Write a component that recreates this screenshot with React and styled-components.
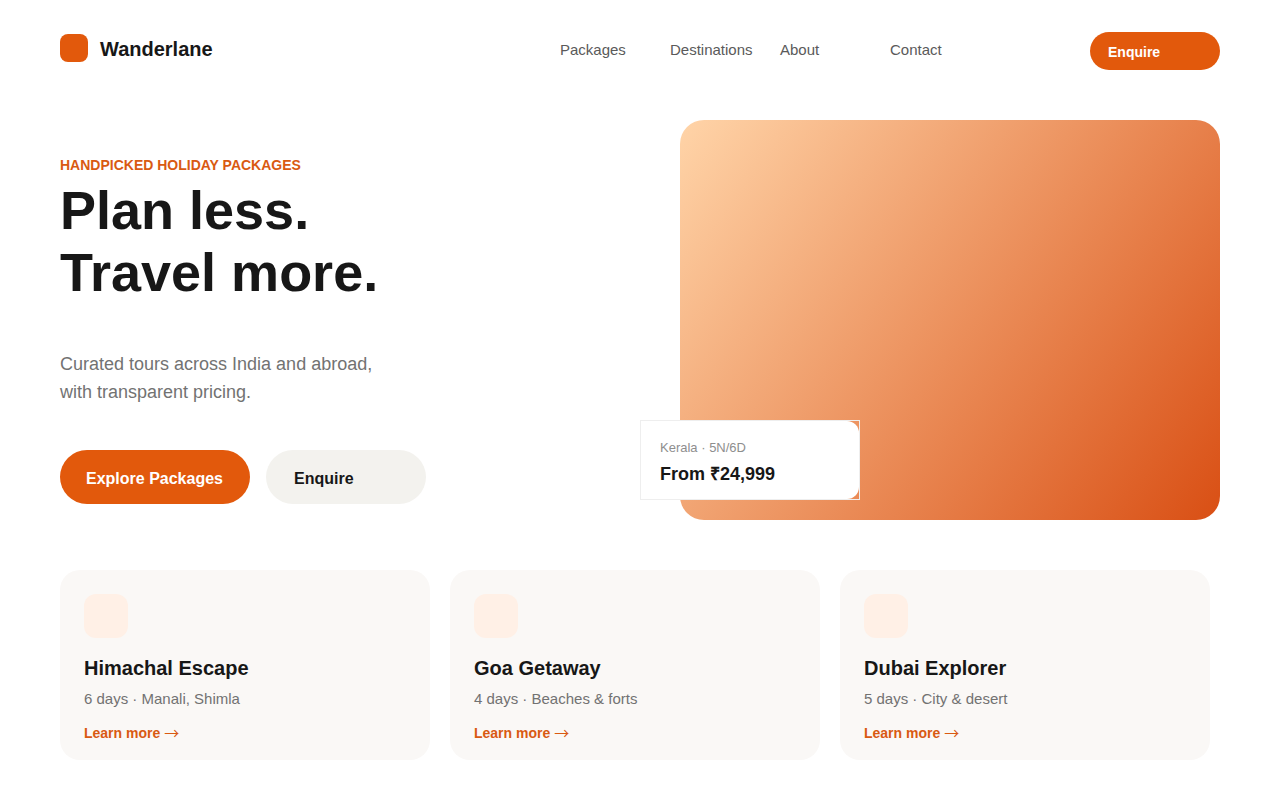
import React from 'react';
import styled, { createGlobalStyle, ThemeProvider } from 'styled-components';

const theme = {
    colors: {
        primary: '#e2590c',
        link: '#d95a12',
        text: '#171717',
        nav: '#5a5a5a',
        textSecondary: '#727272',
        muted: '#8e8e8e',
        surface: '#faf8f6',
        soft: '#f3f2ee',
        tint: '#fff0e6',
        onPrimary: '#ffffff'
    }
};

const GlobalStyle = createGlobalStyle`
    * {
        box-sizing: border-box;
    }

    body {
        margin: 0;
        background-color: #fff;
        color: ${({ theme }) => theme.colors.text};
        font-family: 'Liberation Sans', Arial, sans-serif;
    }

    h1, h2, h3, p {
        margin: 0;
    }

    a {
        color: inherit;
        text-decoration: none;
    }
`;

// --- Styled Components ---
const Page = styled.div`
    padding: 32px 60px 40px;
`;

const Header = styled.header`
    display: grid;
    grid-template-columns: 1fr auto auto;
    column-gap: 90px;
    align-items: start;
`;

const Brand = styled.a`
    display: flex;
    align-items: flex-start;
    gap: 12px;
    padding-top: 2px;
    font-size: 20px;
    font-weight: 700;
    line-height: 30px;
`;

const BrandMark = styled.span`
    width: 28px;
    height: 28px;
    border-radius: 8px;
    background-color: ${({ theme }) => theme.colors.primary};
`;

const Nav = styled.nav`
    display: grid;
    grid-template-columns: repeat(4, 110px);
    font-size: 15px;
    line-height: 36px;
    color: ${({ theme }) => theme.colors.nav};
`;

const Button = styled.button`
    width: ${({ $width }) => $width};
    height: ${({ $small }) => ($small ? '38px' : '54px')};
    padding: ${({ $small, $soft }) => ($small ? '2px 18px 0' : $soft ? '4px 28px 0' : '4px 26px 0')};
    border: none;
    border-radius: 27px;
    background-color: ${({ $soft, theme }) => ($soft ? theme.colors.soft : theme.colors.primary)};
    color: ${({ $soft, theme }) => ($soft ? theme.colors.text : theme.colors.onPrimary)};
    font-family: inherit;
    font-size: ${({ $small }) => ($small ? '14px' : '16px')};
    font-weight: 700;
    text-align: left;
    white-space: nowrap;
    cursor: pointer;
`;

const Hero = styled.main`
    display: grid;
    grid-template-columns: 1fr 540px;
    gap: 80px;
    margin-top: 50px;
`;

const HeroCopy = styled.div`
    padding-top: 36px;
`;

const Eyebrow = styled.p`
    font-size: 14px;
    font-weight: 700;
    line-height: 18px;
    color: ${({ theme }) => theme.colors.link};
`;

const Headline = styled.h1`
    margin-top: 5px;
    font-size: 54px;
    line-height: 62px;
`;

const Lead = styled.p`
    margin-top: 47px;
    font-size: 18px;
    line-height: 28px;
    color: ${({ theme }) => theme.colors.textSecondary};
`;

const Actions = styled.div`
    display: flex;
    gap: 16px;
    margin-top: 44px;
`;

const HeroVisual = styled.div`
    position: relative;
    height: 400px;
    border-radius: 24px;
    background: linear-gradient(127deg, #ffd4a8, #d94f14);
`;

const PriceTag = styled.div`
    position: absolute;
    left: -40px;
    bottom: 20px;
    width: 220px;
    height: 80px;
    border: 1px solid #eeeeee;
`;

const PriceBody = styled.div`
    height: 100%;
    padding: 17px 19px;
    border-radius: 12px;
    background-color: #fff;
`;

const PriceLabel = styled.p`
    font-size: 13px;
    line-height: 20px;
    color: ${({ theme }) => theme.colors.muted};
`;

const Price = styled.p`
    margin-top: 3px;
    font-size: 18px;
    font-weight: 700;
    line-height: 26px;
`;

const CardGrid = styled.section`
    display: grid;
    grid-template-columns: repeat(3, 1fr);
    gap: 20px;
    margin-top: 50px;
    padding-right: 10px;
`;

const Card = styled.article`
    padding: 24px 24px 17px;
    border-radius: 20px;
    background-color: ${({ theme }) => theme.colors.surface};
`;

const CardIcon = styled.div`
    width: 44px;
    height: 44px;
    border-radius: 12px;
    background-color: ${({ theme }) => theme.colors.tint};
`;

const CardTitle = styled.h2`
    margin-top: 18px;
    font-size: 20px;
    line-height: 24px;
`;

const CardText = styled.p`
    margin-top: 8px;
    font-size: 15px;
    line-height: 22px;
    color: ${({ theme }) => theme.colors.textSecondary};
`;

const CardLink = styled.a`
    display: flex;
    gap: 4px;
    width: fit-content;
    margin-top: 13px;
    font-size: 14px;
    font-weight: 700;
    line-height: 20px;
    color: ${({ theme }) => theme.colors.link};
`;

const Arrow = styled.span`
    font-family: 'Noto Sans CJK JP', sans-serif;
    font-size: 15px;
    font-weight: 400;
`;

const navLinks = ['Packages', 'Destinations', 'About', 'Contact'];

const packages = [
    { title: 'Himachal Escape', text: '6 days · Manali, Shimla' },
    { title: 'Goa Getaway', text: '4 days · Beaches & forts' },
    { title: 'Dubai Explorer', text: '5 days · City & desert' }
];

const App = () => (
    <ThemeProvider theme={theme}>
        <GlobalStyle />
        <Page>
            <Header>
                <Brand href="#">
                    <BrandMark />
                    Wanderlane
                </Brand>
                <Nav>
                    {navLinks.map(link => (
                        <a key={link} href={`#${link.toLowerCase()}`}>{link}</a>
                    ))}
                </Nav>
                <Button type="button" $small $width="130px">Enquire</Button>
            </Header>

            <Hero>
                <HeroCopy>
                    <Eyebrow>HANDPICKED HOLIDAY PACKAGES</Eyebrow>
                    <Headline>Plan less.<br />Travel more.</Headline>
                    <Lead>Curated tours across India and abroad,<br />with transparent pricing.</Lead>
                    <Actions>
                        <Button type="button" $width="190px">Explore Packages</Button>
                        <Button type="button" $soft $width="160px">Enquire</Button>
                    </Actions>
                </HeroCopy>
                <HeroVisual>
                    <PriceTag>
                        <PriceBody>
                            <PriceLabel>Kerala · 5N/6D</PriceLabel>
                            <Price>From ₹24,999</Price>
                        </PriceBody>
                    </PriceTag>
                </HeroVisual>
            </Hero>

            <CardGrid>
                {packages.map(item => (
                    <Card key={item.title}>
                        <CardIcon />
                        <CardTitle>{item.title}</CardTitle>
                        <CardText>{item.text}</CardText>
                        <CardLink href="#packages">Learn more <Arrow>→</Arrow></CardLink>
                    </Card>
                ))}
            </CardGrid>
        </Page>
    </ThemeProvider>
);

export default App;
